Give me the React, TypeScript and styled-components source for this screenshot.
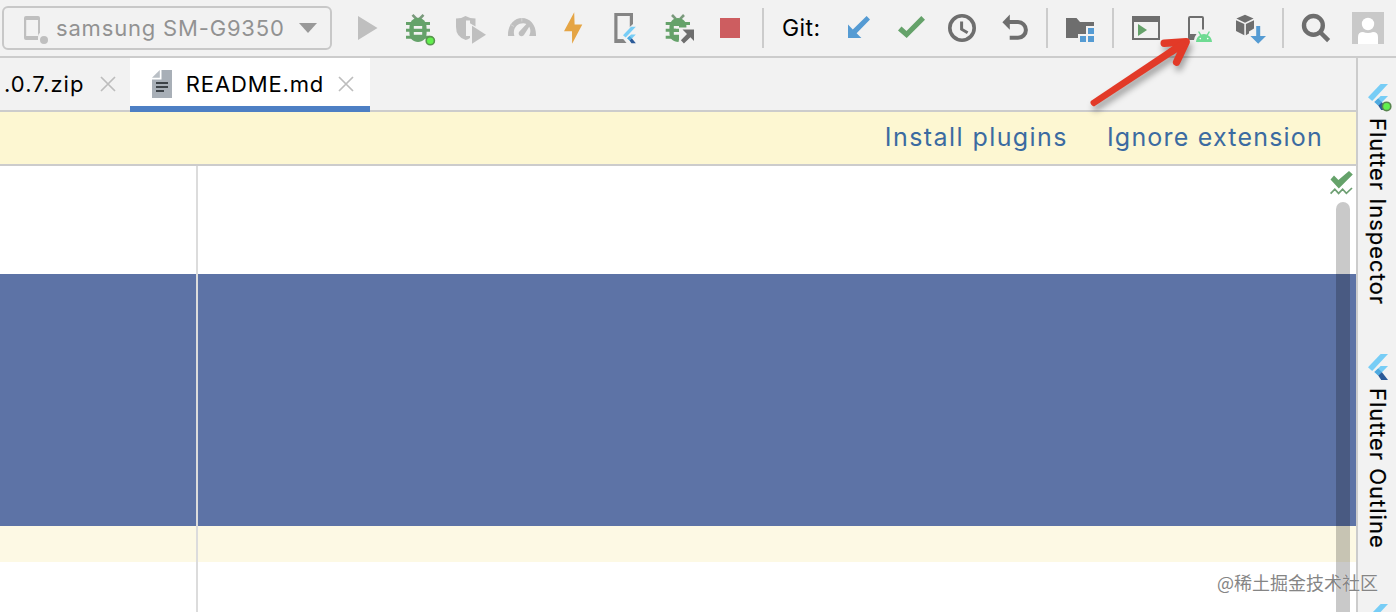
import React from 'react';
import styled, { createGlobalStyle } from 'styled-components';

const GRAY = '#6e6e6e';
const DISABLED = '#bfbfbf';
const GREEN = '#65a26a';
const BLUE = '#559bd3';
const LINE = '#cccccc';
const PANEL = '#f2f2f2';

const GlobalStyle = createGlobalStyle`
	* {
		box-sizing: border-box;
	}
	body {
		margin: 0;
		overflow: hidden;
		background: ${PANEL};
		font-family: Inter, 'Noto Sans CJK SC', sans-serif;
		color: #000;
	}
`;

type IconProps = {
	children: React.ReactNode;
};

const Icon = ({ children }: IconProps) => (
	<StyledIcon width={32} height={32} viewBox='0 0 32 32'>
		{children}
	</StyledIcon>
);

const FlutterShape = () => (
	<>
		<path d='M12.6 0H20L4.2 17L0 13.2Z' fill='#77cdf6' />
		<path d='M12.6 12H20L10.6 21.8L6.4 18Z' fill='#77cdf6' />
		<path d='M10.2 21.6L13.8 18L20 26H13.2Z' fill='#2b5a98' />
		<path d='M6.4 18L10.1 14.4L13.8 18L10.2 21.6Z' fill='#4fa9df' />
	</>
);

const FlutterIcon = ({ running }: { running?: boolean }) => (
	<StyledIcon width={24} height={28} viewBox='0 0 24 28'>
		<FlutterShape />
		{running && <circle cx='18.6' cy='22.4' r='4.2' fill='#62ef4e' stroke='#59854f' strokeWidth='1.6' />}
	</StyledIcon>
);

const CloseIcon = () => (
	<StyledIcon width={16} height={16} viewBox='0 0 16 16'>
		<path d='M1 0L15 14M15 0L1 14' stroke='#bdbdbd' strokeWidth='1.7' />
	</StyledIcon>
);

const RunIcons = () => (
	<IconGroup>
		<Icon>
			<path d='M8 4L27.5 16L8 28Z' fill={DISABLED} />
		</Icon>
		<Icon>
			<path d='M10.5 2.8L14.5 7M21.5 2.8L17.5 7' stroke='#7b9a7d' strokeWidth='2.6' />
			<path d='M4 11.5H28M4 18.2H28M4 25.2H28' stroke={GREEN} strokeWidth='3' />
			<path
				d='M16 5.8C21 5.8 24.6 10 24.6 16V21C24.6 26.5 21 30 16 30S7.4 26.5 7.4 21V16C7.4 10 11 5.8 16 5.8Z'
				fill={GREEN}
			/>
			<path d='M11.8 14H20.2V16.8H11.8ZM11.8 20H20.2V22.8H11.8Z' fill={PANEL} />
			<circle cx='28.3' cy='28.7' r='4.1' fill='#62ef4e' stroke='#59944f' strokeWidth='1.6' />
		</Icon>
		<Icon>
			<path
				d='M2 6.5Q7.5 6.5 11.5 4Q16 6.5 21.5 6.5V14.5L16 11.2V8.5H12V24H16V26Q14 27.6 11.7 28Q2 25 2 15Z'
				fill={DISABLED}
			/>
			<path d='M18 13.8L32 22.8L18 31.8Z' fill={DISABLED} />
		</Icon>
		<Icon>
			<path
				d='M2 24C1.5 13 8 6 16 6S30.5 13 30 24H23.2C25 20 24.5 17 23.2 14.8L17.8 23.2Q15.5 25 13.5 23.4Q12 21.8 13.2 19.8L20.4 12C15 9.4 5.5 14 8.4 24Z'
				fill={DISABLED}
			/>
			<path d='M4.5 12.5L8 14.5M15.8 6V9.5' stroke='#d5d5d5' strokeWidth='1' />
		</Icon>
		<Icon>
			<path d='M16.2 0.3L6 19.2H14L14.1 31.7L24.3 12.4H16.6Z' fill='#e5a545' />
		</Icon>
		<Icon>
			<path d='M4.3 1H23V14.5L13 24.5V31H4.3ZM7.5 4V27.3H13V24L19.8 17V4Z' fill='#858585' fillRule='evenodd' />
			<path d='M23 12L11 23L17 32H26Z' fill={PANEL} />
			<path d='M7.5 27.3H13.5L16.5 31H7.5Z' fill='#858585' />
			<g transform='translate(13 14.7) scale(.64)'>
				<FlutterShape />
			</g>
		</Icon>
		<Icon>
			<path d='M10 3L14 7.2M22 3L18 7.2' stroke='#7b9a7d' strokeWidth='2.6' />
			<path d='M3.7 11.5H28M3.7 18.2H14M3.7 25.2H14' stroke={GREEN} strokeWidth='3' />
			<path
				d='M16 6C21 6 24.4 10 24.4 14V16H17V14H11.8V16.8H17V20H11.8V22.8H18L16.5 30C11 30 7.4 26.5 7.4 21V16C7.4 10 11 6 16 6Z'
				fill={GREEN}
			/>
			<path d='M17 15.5H34V32H17Z' fill={PANEL} />
			<path d='M20.5 17.5H32V29L28.4 25.3L21.9 31.5L18.9 28.3L25 22Z' fill={GRAY} />
		</Icon>
		<Icon>
			<path d='M6 6H26V26H6Z' fill='#cd5d60' />
		</Icon>
	</IconGroup>
);

const GitIcons = () => (
	<IconGroup>
		<Icon>
			<path d='M6 26V12.6L10.8 17.6L24.6 4L28 7.4L14.6 21.2L19.4 26Z' fill={BLUE} />
		</Icon>
		<Icon>
			<path d='M4 18.4L7.5 14.6L12.5 19L27.3 4L31 7.7L12.7 26Z' fill={GREEN} />
		</Icon>
		<Icon>
			<circle cx='16' cy='16' r='12.2' fill='none' stroke={GRAY} strokeWidth='3.6' />
			<path d='M15.6 9.6V17.2L21.6 20.8' fill='none' stroke={GRAY} strokeWidth='3' />
		</Icon>
		<Icon>
			<path d='M10 10H20A7.8 7.8 0 0 1 20 25.8H11.7' fill='none' stroke={GRAY} strokeWidth='4' />
			<path d='M4.4 10.2L11.8 2.6V17.8Z' fill={GRAY} />
		</Icon>
	</IconGroup>
);

const ToolIcons = () => (
	<IconGroup>
		<Icon>
			<path d='M2 4H30V28H2ZM4 10V26H28V10Z' fill={GRAY} fillRule='evenodd' />
			<path d='M8 12L17 18L8 24Z' fill={GREEN} />
		</Icon>
		<Icon>
			<path
				d='M8 4H20Q22 4 22 6V17.5H20V6H8V22H14.5Q12.5 24.5 12 28H8Q6 28 6 26V6Q6 4 8 4Z'
				fill={GRAY}
			/>
			<path
				d='M14 30Q14.2 25.4 18 23.2L16 19.8L17.2 19.2L19.2 22.6Q22 21.6 24.8 22.6L26.8 19.2L28 19.8L26 23.2Q29.8 25.4 30 30Z'
				fill='#6fdb93'
			/>
			<circle cx='18.3' cy='26.6' r='0.8' fill='#fff' />
			<circle cx='25.7' cy='26.6' r='0.8' fill='#fff' />
		</Icon>
		<Icon>
			<path d='M11 2.7L19.6 6.6L11 10.7L2.4 6.6Z' fill={GRAY} />
			<path d='M2 8.3L10.3 12V23.3L2 19Z' fill={GRAY} />
			<path d='M11.9 12L20 8.3V18.4L11.9 23.3Z' fill={GRAY} />
			<path d='M20 12H24V22H15V19.5L20 16.5Z' fill={PANEL} />
			<path d='M22.2 14H26.2V24H32L24.2 31.8L16.4 24H22.2Z' fill={BLUE} />
		</Icon>
	</IconGroup>
);

const MainToolbar = () => (
	<StyledToolbar>
		<DeviceSelect>
			<StyledIcon width={26} height={32} viewBox='0 0 26 32'>
				<path
					d='M4 4H16Q18 4 18 6V21Q15.5 22 16 28H4Q2 28 2 26V6Q2 4 4 4ZM4.2 8V24H16V8Z'
					fill={DISABLED}
					fillRule='evenodd'
				/>
				<circle cx='22' cy='28' r='4' fill={DISABLED} />
			</StyledIcon>
			<DeviceName>samsung SM-G9350</DeviceName>
			<StyledIcon width={18} height={10} viewBox='0 0 18 10'>
				<path d='M0 0H18L9 10Z' fill='#999' />
			</StyledIcon>
		</DeviceSelect>
		<RunIcons />
		<Separator />
		<GitLabel>Git:</GitLabel>
		<GitIcons />
		<Separator />
		<Icon>
			<path d='M2 6H12.5L16 10H30V14H22V22H14V26H2Z' fill={GRAY} />
			<path d='M24 16H30V22H24ZM16 24H22V30H16ZM24 24H30V30H24Z' fill={BLUE} />
		</Icon>
		<Separator />
		<ToolIcons />
		<Separator />
		<IconGroup>
			<Icon>
				<circle cx='13.4' cy='13.4' r='9.4' fill='none' stroke={GRAY} strokeWidth='4.4' />
				<path d='M20 20L28.6 28.6' stroke={GRAY} strokeWidth='4.4' />
			</Icon>
			<Icon>
				<path d='M0 0H32V32H0Z' fill='#c9c9c9' />
				<circle cx='16' cy='12' r='6.2' fill='#fff' />
				<path d='M6 32V25Q6 20 11 20Q16 22 21 20Q26 20 26 25V32Z' fill='#fff' />
			</Icon>
		</IconGroup>
	</StyledToolbar>
);

const EditorTabs = () => (
	<StyledTabs>
		<Tab width={130} indent={4}>
			<TabName space={1.05}>.0.7.zip</TabName>
			<CloseIcon />
		</Tab>
		<Tab width={240} indent={22} active>
			<StyledIcon width={20} height={28} viewBox='0 0 20 28'>
				<path d='M9.5 -1H20V27H0V8.5H9.5Z' fill='#a8afb7' />
				<path d='M7.8 -1V6.8H0Z' fill='#b9bfc5' />
				<path d='M4 12H16M4 16H16M4 20H12' stroke='#3d4348' strokeWidth='1.8' />
			</StyledIcon>
			<TabName space={0.85}>README.md</TabName>
			<CloseIcon />
		</Tab>
	</StyledTabs>
);

const EditorArea = () => (
	<StyledEditor>
		<BlankLines height={108} />
		<SelectedLines />
		<CaretLine />
		<MarginGuide />
		<ErrorStripe>
			<StyledIcon width={23} height={24} viewBox='0 0 23 24'>
				<path d='M0.5 8.4L4 4.6L8.4 9L19 0L22.8 3.6L8.8 17.6Z' fill={GREEN} />
				<path
					d='M0.6 22.6L4.8 18.2L8.6 22.4L12.6 18.2L16.4 22.4L22 17'
					fill='none'
					stroke='#6d9f72'
					strokeWidth='1.7'
				/>
			</StyledIcon>
			<Scrollbar />
		</ErrorStripe>
	</StyledEditor>
);

const App = () => (
	<>
		<GlobalStyle />
		<StyledWindow>
			<MainToolbar />
			<StyledBody>
				<StyledMain>
					<EditorTabs />
					<Banner>
						<BannerLink space={1.43}>Install plugins</BannerLink>
						<BannerLink space={1.2}>Ignore extension</BannerLink>
					</Banner>
					<EditorArea />
				</StyledMain>
				<SideBar>
					<SideButton height={270}>
						<FlutterIcon running />
						<SideLabel>Flutter Inspector</SideLabel>
					</SideButton>
					<SideButton height={250}>
						<FlutterIcon />
						<SideLabel>Flutter Outline</SideLabel>
					</SideButton>
					<SideButton height={40}>
						<FlutterIcon />
					</SideButton>
				</SideBar>
			</StyledBody>
			<PointerArrow width={120} height={90} viewBox='0 0 120 90'>
				<path d='M10.8 71Q9.4 74.6 14 76.6L98 21.5L94.5 15Z' fill='#e23a28' />
				<path
					d='M84.2 13.2L106.2 11.8L96.6 32.2'
					fill='none'
					stroke='#e23a28'
					strokeWidth='7.4'
					strokeLinecap='round'
					strokeLinejoin='round'
				/>
				<path d='M90 22.5L105 12.5' stroke='#e23a28' strokeWidth='7' />
			</PointerArrow>
			<Watermark>@稀土掘金技术社区</Watermark>
		</StyledWindow>
	</>
);

const StyledWindow = styled.div`
	position: relative;
	display: flex;
	flex-direction: column;
	width: 1396px;
	height: 612px;
	overflow: hidden;
	background: ${PANEL};
`;

const StyledIcon = styled.svg`
	display: block;
	flex: none;
	overflow: visible;
`;

const StyledToolbar = styled.div`
	display: flex;
	align-items: center;
	flex: none;
	height: 58px;
	padding-left: 2px;
	border-bottom: 2px solid ${LINE};
`;

const DeviceSelect = styled.div`
	display: flex;
	align-items: center;
	width: 330px;
	height: 44px;
	margin-right: 18px;
	padding-left: 18px;
	border: 2px solid #c8c8c8;
	border-radius: 6px;
`;

const DeviceName = styled.span`
	width: 243px;
	padding-left: 8px;
	font-size: 22px;
	letter-spacing: 0.82px;
	white-space: nowrap;
	color: #929292;
	margin-right: 8px;
`;

const IconGroup = styled.div`
	display: flex;
	gap: 20px;
`;

const Separator = styled.div`
	width: 2px;
	height: 40px;
	margin: 0 16px;
	background: ${LINE};
`;

const GitLabel = styled.span`
	width: 62px;
	padding-left: 2px;
	font-size: 23px;
	letter-spacing: 0.4px;
`;

const StyledBody = styled.div`
	display: flex;
	flex: 1;
	min-height: 0;
`;

const StyledMain = styled.div`
	display: flex;
	flex-direction: column;
	flex: 1;
`;

const StyledTabs = styled.div`
	display: flex;
	flex: none;
	height: 54px;
	box-shadow: inset 0 -2px ${LINE};
`;

type TabProps = {
	width: number;
	indent: number;
	active?: boolean;
};

const Tab = styled.div<TabProps>`
	display: flex;
	align-items: center;
	justify-content: space-between;
	width: ${(props) => props.width}px;
	padding: 0 ${(props) => (props.active ? 16 : 14)}px 0 ${(props) => props.indent}px;
	${(props) =>
		props.active &&
		`
		background: #fff;
		box-shadow: inset 0 -6px #4d7fc4;
	`}
`;

type SpaceProps = {
	space: number;
};

const TabName = styled.span<SpaceProps>`
	padding-bottom: 2px;
	font-size: 22px;
	letter-spacing: ${(props) => props.space}px;
	white-space: nowrap;
`;

const Banner = styled.div`
	display: flex;
	align-items: center;
	justify-content: flex-end;
	gap: 39px;
	flex: none;
	height: 54px;
	padding: 0 33px 2px 0;
	border-bottom: 2px solid ${LINE};
	background: #fdf7d2;
`;

const BannerLink = styled.span<SpaceProps>`
	font-size: 25px;
	letter-spacing: ${(props) => props.space}px;
	line-height: 50px;
	color: #3b6ba1;
	white-space: nowrap;
`;

const StyledEditor = styled.div`
	position: relative;
	flex: 1;
	background: #fff;
`;

const BlankLines = styled.div<{ height: number }>`
	height: ${(props) => props.height}px;
`;

const SelectedLines = styled.div`
	height: 252px;
	background: #5d73a6;
`;

const CaretLine = styled.div`
	height: 36px;
	background: #fdf9e4;
`;

/* right margin line, drawn over the text background */
const MarginGuide = styled.div`
	position: absolute;
	top: 0;
	bottom: 0;
	left: 196px;
	width: 2px;
	background: #dcdcdc;
`;

const ErrorStripe = styled.div`
	position: absolute;
	top: 0;
	right: 0;
	bottom: 0;
	display: flex;
	flex-direction: column;
	width: 26px;
	padding-top: 5px;
`;

const Scrollbar = styled.div`
	flex: 1;
	width: 14px;
	margin: 7px 0 0 6px;
	border-radius: 7px 7px 0 0;
	background: rgba(0, 0, 0, 0.21);
`;

const SideBar = styled.div`
	flex: none;
	width: 40px;
	padding: 26px 0 0 10px;
	border-left: 2px solid ${LINE};
`;

const SideButton = styled.div<{ height: number }>`
	display: flex;
	flex-direction: column;
	height: ${(props) => props.height}px;
`;

const SideLabel = styled.span`
	width: 20px;
	margin-top: 6px;
	writing-mode: vertical-rl;
	font-size: 22px;
	line-height: 20px;
	letter-spacing: 1px;
	white-space: nowrap;
	-webkit-text-stroke: 0.2px #000;
`;

const PointerArrow = styled.svg`
	position: absolute;
	top: 30px;
	left: 1080px;
	filter: drop-shadow(2px 5px 3px rgba(0, 0, 0, 0.35));
`;

const Watermark = styled.div`
	position: absolute;
	right: 18px;
	bottom: 17px;
	font-family: 'Noto Sans CJK SC', sans-serif;
	font-size: 18px;
	line-height: 26px;
	color: #858585;
	text-shadow: 0 0 1px #fff;
`;

export default App;
